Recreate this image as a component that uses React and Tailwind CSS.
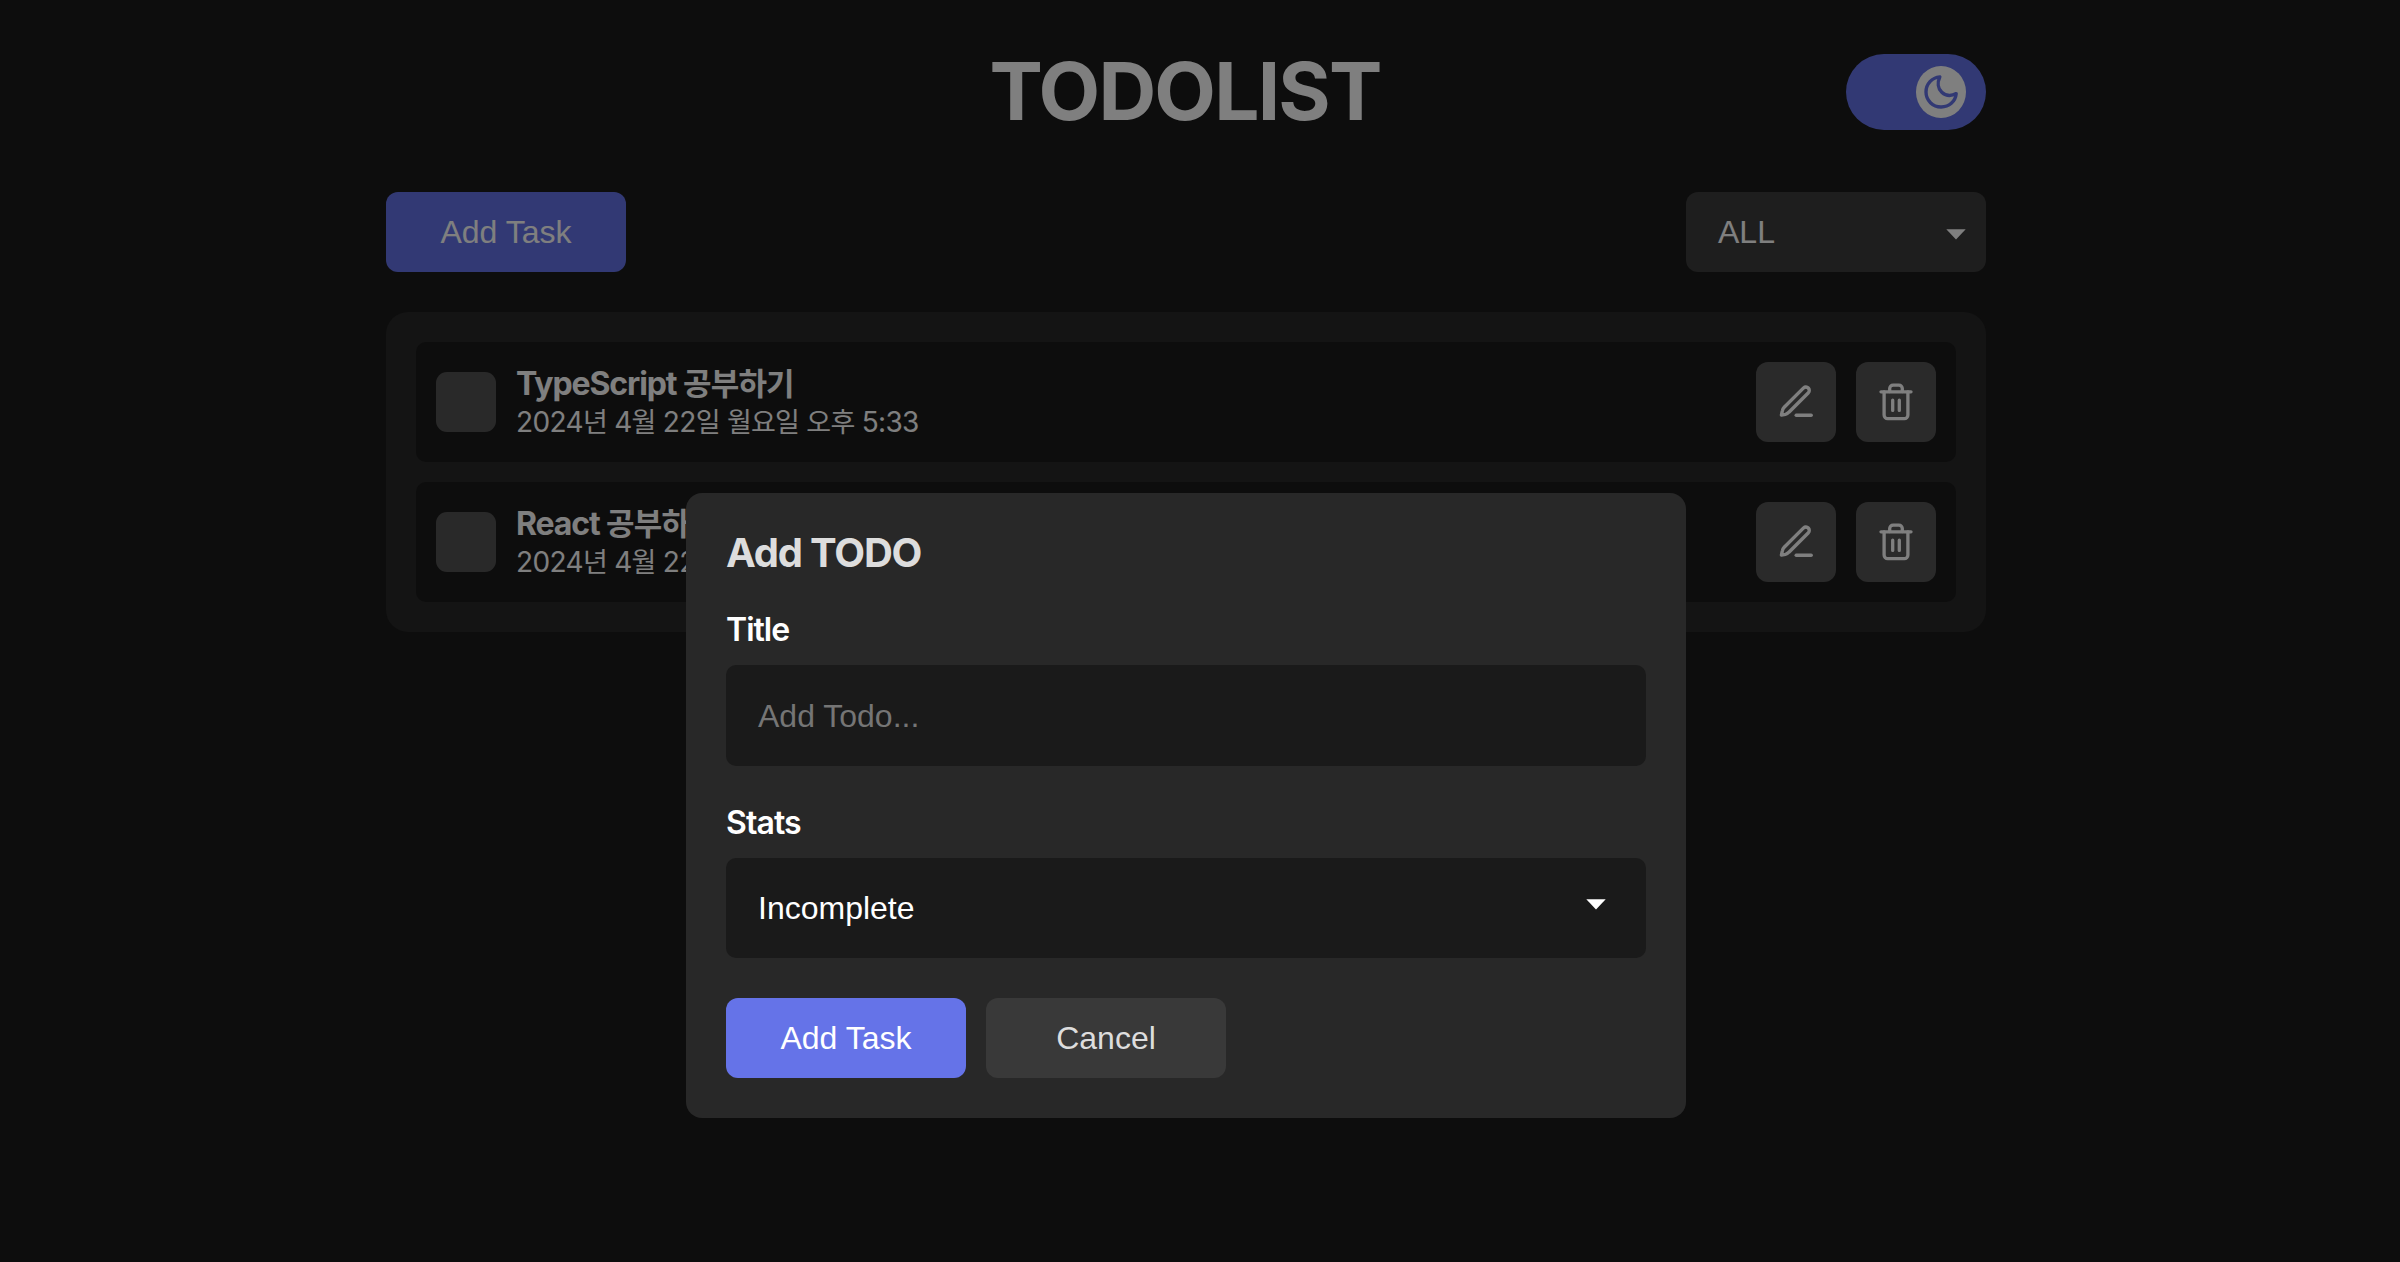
function MoonIcon() {
  return (
    <svg viewBox="0 0 50 52" className="h-[52px] w-[50px]" fill="none" stroke="#6573e8" strokeWidth="3.4" strokeLinecap="round" strokeLinejoin="round">
      <path d="M23.8 10.9C16 11.6 10 18 10 26A15 15 0 0 0 25.2 41C33 41 39.4 35.6 40.2 27.6C35 30.4 29.6 29.8 25.8 26.2C21.8 22.4 21.2 16.4 23.8 10.9Z" />
    </svg>
  );
}

function PenIcon() {
  return (
    <svg viewBox="0 0 48 48" className="h-12 w-12" fill="none" stroke="currentColor" strokeWidth="3.4" strokeLinecap="round" strokeLinejoin="round">
      <path d="M31.6 9.9 12.2 29.3C11 30.5 10.6 31.2 10.3 33L9.4 37.1 13.4 36.4C15.2 36 15.8 35.4 16.9 34.2L36.4 14.7A3.4 3.4 0 0 0 31.6 9.9Z" />
      <path d="M24.2 37.3H39.2" />
    </svg>
  );
}

function TrashIcon() {
  return (
    <svg viewBox="0 0 48 48" className="h-12 w-12" fill="none" stroke="currentColor" strokeWidth="3.3" strokeLinecap="round" strokeLinejoin="round">
      <path d="M9 13.8H39" />
      <path d="M17.7 13.5V10.6A3.4 3.4 0 0 1 21.1 7.2H26.9A3.4 3.4 0 0 1 30.3 10.6V13.5" />
      <path d="M12.1 14V37A3.6 3.6 0 0 0 15.7 40.6H32.3A3.6 3.6 0 0 0 35.9 37V14" />
      <path d="M20.7 22.2V32.4M27.3 22.2V32.4" />
    </svg>
  );
}

function Caret() {
  return (
    <svg viewBox="0 0 20 11" className="h-[11px] w-5" fill="currentColor">
      <path d="M0.3 0.3H19.7L10 10.6Z" />
    </svg>
  );
}

function Mixed({ text, hangul }) {
  return text.split(/([가-힣]+)/).map((part, i) =>
    /[가-힣]/.test(part) ? (
      <span key={i} className={hangul}>{part}</span>
    ) : (
      part
    )
  );
}

function Task({ title, date }) {
  return (
    <li className="flex h-[120px] items-center rounded-[10px] bg-[#1a1a1a] px-5">
      <span className="h-[60px] w-[60px] rounded-[11px] bg-[#535353]" />
      <div className="ml-5 flex-1 pt-0.5">
        <p className="h-[39px] whitespace-pre text-[32px] leading-[39px] font-bold tracking-[-1.1px]">
          <Mixed text={title} hangul="font-['Noto_Sans_CJK_KR'] text-[31px] leading-none font-bold tracking-[-0.8px]" />
        </p>
        <p className="h-[39px] whitespace-pre text-[28px] leading-[39px] tracking-[-0.65px]">
          <Mixed text={date} hangul="font-['Noto_Sans_CJK_KR'] text-[27px] leading-none tracking-[-0.8px]" />
        </p>
      </div>
      <div className="flex gap-5">
        <button className="flex h-20 w-20 items-center justify-center rounded-xl bg-[#545454]"><PenIcon /></button>
        <button className="flex h-20 w-20 items-center justify-center rounded-xl bg-[#545454]"><TrashIcon /></button>
      </div>
    </li>
  );
}

const tasks = [
  { title: 'TypeScript 공부하기', date: '2024년 4월 22일 월요일 오후 5:33' },
  { title: 'React 공부하기', date: '2024년 4월 22일 월요일 오후 5:33' },
];

export default function App() {
  return (
    <div className="relative h-[1262px] w-full overflow-hidden bg-[#1a1a1a] font-['Inter','Noto_Sans_CJK_KR',sans-serif] text-white">
      <main className="ml-[386px] w-[1600px] pt-[54px]">
        <header className="grid h-[76px] grid-cols-[140px_1fr_140px] items-center">
          <h1 className="col-start-2 h-[76px] pr-0.5 text-center text-[80px] leading-[74px] font-bold tracking-[-1.8px]">TODOLIST</h1>
          <button className="flex h-[76px] items-center justify-end rounded-full bg-[#6573e8] pr-5">
            <span className="h-[52px] w-[50px] rounded-[50%] bg-white"><MoonIcon /></span>
          </button>
        </header>
        <div className="mt-[62px] flex justify-between">
          <button className="h-20 w-60 rounded-xl bg-[#6573e8] font-['Liberation_Sans',sans-serif] text-[32px] leading-none">Add Task</button>
          <div className="flex h-20 w-[300px] items-center justify-between rounded-xl bg-[#3c3c3c] pr-5 pl-8 font-['Liberation_Sans',sans-serif] text-[32px] leading-none">
            ALL
            <span className="pt-1"><Caret /></span>
          </div>
        </div>
        <ul className="mt-10 flex h-80 flex-col gap-5 rounded-[22px] bg-[#282828] p-[30px]">
          {tasks.map((t) => <Task key={t.title} {...t} />)}
        </ul>
      </main>

      <div className="absolute inset-0 bg-black/50 pt-[493px] pl-[686px]">
        <section className="h-[625px] w-[1000px] rounded-2xl bg-[#282828] px-10 pt-[30px]">
          <h2 className="h-[60px] text-[40px] leading-[60px] font-bold tracking-[-1.2px] text-[#dddddd]">Add TODO</h2>
          <label className="mt-[27px] block h-[40px] text-[32px] leading-[40px] font-semibold tracking-[-1px]">Title</label>
          <div className="mt-[15px] flex h-[101px] items-center rounded-[10px] bg-[#1a1a1a] px-8 font-['Liberation_Sans',sans-serif] text-[32px] leading-none text-[#757575]">Add Todo...</div>
          <label className="mt-[37px] block h-[40px] text-[32px] leading-[40px] font-semibold tracking-[-0.9px]">Stats</label>
          <div className="mt-[15px] flex h-[100px] items-center justify-between rounded-[10px] bg-[#1a1a1a] pr-10 pl-8 font-['Liberation_Sans',sans-serif] text-[32px] leading-none">
            Incomplete
            <span className="pb-2"><Caret /></span>
          </div>
          <div className="mt-10 flex gap-5 font-['Liberation_Sans',sans-serif] text-[32px] leading-none">
            <button className="h-20 w-60 rounded-xl bg-[#6573e8]">Add Task</button>
            <button className="h-20 w-60 rounded-xl bg-[#393939] text-[#dddddd]">Cancel</button>
          </div>
        </section>
      </div>
    </div>
  );
}
